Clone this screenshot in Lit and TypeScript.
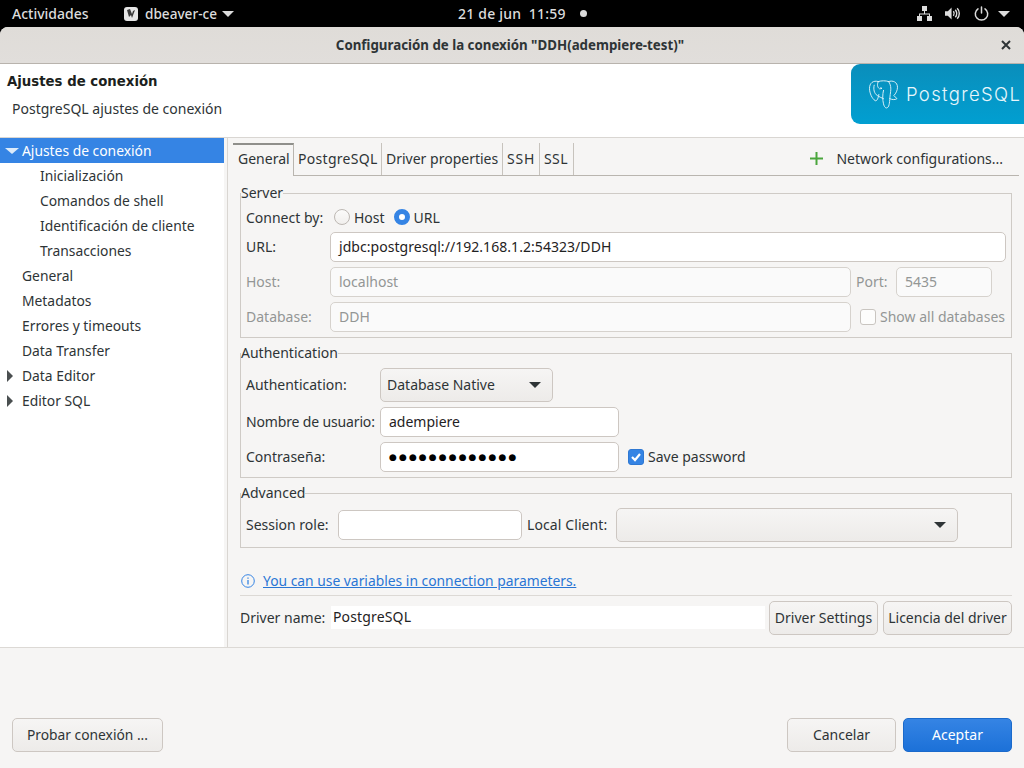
import { LitElement, html, css, svg } from "lit";
import { customElement } from "lit/decorators.js";

const caret = (cls: string) => html`<span class="caret ${cls}"></span>`;

@customElement("app-root")
export class AppRoot extends LitElement {
  static styles = css`
    :host {
      display: flex;
      flex-direction: column;
      height: 768px;
      width: 1024px;
      overflow: hidden;
      background: #000;
      font-family: "Noto Sans", "Liberation Sans", sans-serif;
      font-size: 14px;
      color: #2e3436;
    }
    * { box-sizing: border-box; }
    .topbar {
      height: 27px;
      flex: none;
      display: flex;
      align-items: center;
      color: #dcdcdc;
      font-weight: 500;
      position: relative;
    }
    .act { margin-left: 12px; width: 112px; }
    .appicon { width: 14px; height: 14px; display: block; }
    .appname { margin-left: 7px; font-size: 13.6px; }
    .tri-top {
      width: 0; height: 0; margin-left: 5px;
      border-left: 6px solid transparent;
      border-right: 6px solid transparent;
      border-top: 6px solid #dcdcdc;
    }
    .clock { position: absolute; left: 458px; top: 4px; width: 130px; display: flex; align-items: center; line-height: 19px; letter-spacing: .2px; }
    .dot { width: 7px; height: 7px; border-radius: 50%; background: #dcdcdc; position: absolute; left: 122px; top: 6px; }
    .tray { margin-left: auto; margin-right: 14px; display: flex; align-items: center; gap: 13px; }
    .tray svg { display: block; }
    .tray .power { margin-left: 1px; }
    .tray .tri-top { margin-left: -4px; }
    .window {
      flex: 1;
      min-height: 0;
      display: flex;
      flex-direction: column;
      background: #f6f5f4;
      border-radius: 8px 8px 0 0;
      overflow: hidden;
    }
    .titlebar {
      height: 37px;
      flex: none;
      background: linear-gradient(#dfdcd8, #e1dedb);
      border-bottom: 1px solid #b8b3ad;
      display: flex;
      align-items: center;
      justify-content: center;
      position: relative;
      font-weight: 700;
      font-size: 13.3px;
      padding-right: 4px;
    }
    .close { position: absolute; right: 12px; top: 12px; width: 12px; height: 12px; display: block; }
    .banner {
      height: 74px;
      flex: none;
      background: #fff;
      border-bottom: 1px solid #d9d6d2;
      display: flex;
      justify-content: space-between;
      align-items: flex-start;
    }
    .btitle { font-family: "DejaVu Sans", sans-serif; font-weight: 700; font-size: 13.3px; margin: 8px 0 0 7px; line-height: 19px; color: #1c1f20; }
    .bsub { margin: 8px 0 0 12px; line-height: 19px; }
    .logo {
      width: 173px; height: 60px;
      background: linear-gradient(#0a8ebb, #019fd1);
      border-radius: 9px 0 0 9px;
      display: flex; align-items: center;
      overflow: hidden;
      color: #e8f6fb;
    }
    .logo svg { margin-left: 18px; flex: none; }
    .logotext { font-family: "Inter", sans-serif; font-weight: 300; font-size: 18.5px; margin-left: 8px; letter-spacing: 1.35px; white-space: nowrap; }
    .main {
      flex: none;
      display: flex;
      border-bottom: 1px solid #dcd9d5;
    }
    .tree {
      width: 224px;
      flex: none;
      background: #fff;
      margin-right: 3px;
      font-size: 13.85px;
    }
    .row {
      height: 25px;
      line-height: 25px;
      padding-left: 22px;
      position: relative;
      white-space: nowrap;
      color: #2e3436;
    }
    .row.child { padding-left: 40px; }
    .row.sel { background: #3584e4; color: #fff; }
    .caret { position: absolute; width: 0; height: 0; }
    .caret.down {
      left: 5px; top: 10px;
      border-left: 7px solid transparent;
      border-right: 7px solid transparent;
      border-top: 6px solid #dcebfa;
    }
    .caret.right {
      left: 7px; top: 7px;
      border-top: 6px solid transparent;
      border-bottom: 6px solid transparent;
      border-left: 6px solid #4a4f50;
    }
    .panel {
      flex: 1;
      min-width: 0;
      border-left: 1px solid #d9d6d2;
      padding: 5px 12px 12px 12px;
      display: flex;
      flex-direction: column;
    }
    .tabs {
      height: 33px;
      margin: 0 -7px;
      border-bottom: 1px solid #b9b5af;
      display: flex;
      align-items: stretch;
    }
    .tab {
      padding: 4px 0 0 4px;
      line-height: 24px;
      border-right: 1px solid #c7c3bd;
      white-space: nowrap;
      flex: none;
    }
    .tab.on { border-top: 2px solid #8f8f8b; padding: 2px 0 0 5px; margin-bottom: -1px; background: #f6f5f4; border-right-color: #b9b5af; width: 61px; }
    .t88 { width: 88px; letter-spacing: .3px; }
    .t121 { width: 121px; }
    .t37 { width: 37px; letter-spacing: .8px; }
    .t34 { width: 34px; letter-spacing: .4px; }
    .netcfg { margin-left: auto; display: flex; align-items: center; padding: 0 16px 2px 0; gap: 13px; }
    .netcfg svg { display: block; }
    fieldset {
      margin: 0;
      padding: 4px 5px 5px 5px;
      border: 1px solid #cfcbc6;
      min-width: 0;
      display: flex;
      flex-direction: column;
      gap: 5px;
    }
    legend { padding: 0; line-height: 16px; margin-left: -5px; }
    .server { margin-top: 9px; }
    .auth, .adv { margin-top: 7px; }
    .line { display: flex; align-items: center; white-space: nowrap; }
    .lab { flex: none; padding-bottom: 2px; }
    .connect .lab { padding-bottom: 0; }
    .w84 { width: 84px; }
    .w134 { width: 134px; }
    .tight { letter-spacing: -.15px; }
    .connect { height: 24px; margin-bottom: -2px; }
    .radio {
      width: 16px; height: 16px; border-radius: 50%; flex: none;
      border: 1px solid #bdb8b3;
      background: linear-gradient(#fbfbfa, #f1efed);
      margin: 0 4px 0 4px;
    }
    .radio.on { background: #fff; border: 5px solid #3584e4; margin-left: 9px; }
    .inp {
      height: 30px;
      line-height: 27px;
      border: 1px solid #cdc7c2;
      border-radius: 5px;
      background: #fff;
      padding: 0 8px;
      color: #1f2223;
      white-space: nowrap;
    }
    .wide { letter-spacing: .05px; }
    .grow { flex: 1; min-width: 0; }
    .dis { background: #fafafa; color: #939695; border-color: #d6d2cd; }
    .mut { color: #939695; }
    .porthost { margin-left: 5px; width: 40px; }
    .portval { width: 96px; margin-right: 14px; flex: none; }
    .w126 { width: 126px; flex: none; padding-bottom: 2px; }
    .cb {
      width: 16px; height: 16px; flex: none; border-radius: 3px;
      border: 1px solid #c9c5c0;
      background: #fdfdfc;
      margin: 0 4px 0 9px;
      display: block;
    }
    .cb.on { background: #3584e4; border-color: #2f78d2; }
    .cb.on svg { display: block; }
    .sel-btn {
      display: flex; align-items: center; justify-content: space-between;
      height: 34px;
      border: 1px solid #cdc7c2;
      border-radius: 5px;
      background: linear-gradient(#f6f5f4, #edebe9);
      padding: 0 11px 2px 6px;
      flex: none;
    }
    .tri { width: 0; height: 0; border-left: 6px solid transparent; border-right: 6px solid transparent; border-top: 6px solid #2e3436; margin-top: 2px; }
    .w173 { width: 173px; }
    .w239 { width: 239px; flex: none; }
    .first { margin-top: 3px; }
    .w92 { width: 92px; }
    .w184 { width: 184px; flex: none; }
    .dots { font-size: 9px; letter-spacing: 2.1px; color: #000; font-family: "DejaVu Sans", sans-serif; padding-left: 8px; line-height: 28px; }
    .sessline { height: 34px; margin-top: 3px; }
    .lc { margin-left: 5px; width: 89px; letter-spacing: .1px; }
    .w342 { width: 342px; flex: none; }
    .info {
      margin-top: 22px;
      height: 22px;
      display: flex;
      align-items: center;
      gap: 8px;
    }
    .info svg { display: block; margin-left: 1px; }
    .link { color: #2a76d4; text-decoration: underline; line-height: 20px; font-size: 13.85px; }
    .sep { border-top: 1px solid #dcd9d5; margin-top: 3px; }
    .driver { margin-top: 5px; display: flex; align-items: center; }
    .w86 { width: 86px; }
    .drvfield { width: 434px; height: 23px; background: #fff; line-height: 22px; padding-left: 2px; color: #1f2223; margin: 0 4px 1px 5px; flex: none; letter-spacing: .15px; }
    .btn {
      height: 34px;
      border: 1px solid #cdc7c2;
      border-radius: 5px;
      background: linear-gradient(#f6f5f4, #edebe9);
      display: flex; align-items: center; justify-content: center;
      white-space: nowrap;
      flex: none;
      padding-bottom: 2px;
    }
    .b108 { width: 109px; }
    .b129 { width: 129px; margin-left: 5px; }
    .footer {
      flex: 1;
      display: flex;
      align-items: flex-end;
      padding: 0 12px 16px;
      gap: 7px;
    }
    .b151 { width: 151px; margin-right: auto; font-size: 13.8px; }
    .b109 { width: 109px; }
    .ok { background: linear-gradient(#3584e4, #1c71d8); border-color: #1b6acb; color: #fff; }
  `;

  private logoSvg() {
    return svg`<svg width="29" height="29" viewBox="0 0 28 28" fill="none" stroke="#e4f4fa" stroke-width=".9" stroke-linejoin="round" stroke-linecap="round">
      <path d="M9 1.500C4 0 .5 3 .5 8c0 5 2.500 10 5.500 12 2 .5 3-3 3.500-6"/>
      <path d="M9 1.500c3-1 7-1 10 0"/>
      <path d="M19 1.500c4-1.500 8.500.5 8.500 5.500 0 3-1.500 6-3.500 8l3 3c-2 1.500-5 1-7 0"/>
      <path d="M14 10c-1 4-1 9 0 13 1 4 3 5 4.500 3 1.500-2 1.500-8 2-12 .5-4 1.500-8-1.500-12.500"/>
      <path d="M5 5c-1 4 0 8 3 10 2 1.500 4 2 6 3"/>
      <path d="M9 1.500C7.500 4 8 7 10 8.500"/>
      <circle cx="11.500" cy="8" r=".6"/>
    </svg>`;
  }

  render() {
    return html`
      <div class="topbar">
        <span class="act">Actividades</span>
        <svg class="appicon" viewBox="0 0 14 14">
          <rect width="14" height="14" rx="3" fill="#e6e6e6"/>
          <path d="M3 3l2 7 2-2 1 3 3-8-2 1-1 3-2-5z" fill="#3a3a3a"/>
        </svg>
        <span class="appname">dbeaver-ce</span>
        <span class="tri-top"></span>
        <div class="clock"><span>21 de jun&nbsp; 11:59</span><span class="dot"></span></div>
        <div class="tray">
          <svg width="15" height="15" viewBox="0 0 15 15" fill="#dcdcdc"><rect x="5" y="0" width="5" height="5"/><rect x="0" y="10" width="5" height="5"/><rect x="10" y="10" width="5" height="5"/><path d="M7 5h1v2.500h5V10h-1V8.500H3V10H2V7.500h5z"/></svg>
          <svg width="15" height="15" viewBox="0 0 16 15" fill="none" stroke="#dcdcdc"><path d="M0 5h3l4-4v13l-4-4H0z" fill="#dcdcdc" stroke="none"/><path d="M9 5c1 1.500 1 3.500 0 5M11 3.500c2 2.500 2 5.500 0 8M13 2c3 3 3 8 0 11" stroke-width="1.500"/></svg>
          <svg class="power" width="15" height="15" viewBox="0 0 15 15" fill="none" stroke="#dcdcdc" stroke-width="1.500" stroke-linecap="round"><path d="M7.500 1v6"/><path d="M4 2.800a6.200 6.200 0 1 0 7 0"/></svg>
          <span class="tri-top"></span>
        </div>
      </div>
      <div class="window">
        <div class="titlebar">
          Configuración de la conexión "DDH(adempiere-test)"
          <svg class="close" viewBox="0 0 12 12" stroke="#2e3436" stroke-width="2"><path d="M2 2l8 8M10 2l-8 8"/></svg>
        </div>
        <div class="banner">
          <div>
            <div class="btitle">Ajustes de conexión</div>
            <div class="bsub">PostgreSQL ajustes de conexión</div>
          </div>
          <div class="logo">${this.logoSvg()}<span class="logotext">PostgreSQL</span></div>
        </div>
        <div class="main">
          <div class="tree">
            <div class="row sel">${caret("down")}Ajustes de conexión</div>
            <div class="row child">Inicialización</div>
            <div class="row child">Comandos de shell</div>
            <div class="row child">Identificación de cliente</div>
            <div class="row child">Transacciones</div>
            <div class="row">General</div>
            <div class="row">Metadatos</div>
            <div class="row">Errores y timeouts</div>
            <div class="row">Data Transfer</div>
            <div class="row">${caret("right")}Data Editor</div>
            <div class="row">${caret("right")}Editor SQL</div>
          </div>
          <div class="panel">
            <div class="tabs">
              <div class="tab on">General</div>
              <div class="tab t88">PostgreSQL</div>
              <div class="tab t121">Driver properties</div>
              <div class="tab t37">SSH</div>
              <div class="tab t34">SSL</div>
              <div class="netcfg">
                <svg width="13" height="13" viewBox="0 0 13 13" fill="#4aa63c"><rect x="5.500" y="0" width="2" height="13"/><rect x="0" y="5.500" width="13" height="2"/></svg>
                <span>Network configurations...</span>
              </div>
            </div>
            <fieldset class="server">
              <legend>Server</legend>
              <div class="line connect">
                <span class="lab w84">Connect by:</span>
                <span class="radio"></span><span class="lab">Host</span>
                <span class="radio on"></span><span class="lab">URL</span>
              </div>
              <div class="line">
                <span class="lab w84">URL:</span>
                <div class="inp grow wide">jdbc:postgresql://192.168.1.2:54323/DDH</div>
              </div>
              <div class="line">
                <span class="lab w84 mut">Host:</span>
                <div class="inp dis grow">localhost</div>
                <span class="lab mut porthost">Port:</span>
                <div class="inp dis portval">5435</div>
              </div>
              <div class="line">
                <span class="lab w84 mut">Database:</span>
                <div class="inp dis grow">DDH</div>
                <span class="cb"></span><span class="mut w126">Show all databases</span>
              </div>
            </fieldset>
            <fieldset class="auth">
              <legend>Authentication</legend>
              <div class="line first">
                <span class="lab w134">Authentication:</span>
                <div class="sel-btn w173"><span>Database Native</span><span class="tri"></span></div>
              </div>
              <div class="line">
                <span class="lab w134 tight">Nombre de usuario:</span>
                <div class="inp w239">adempiere</div>
              </div>
              <div class="line">
                <span class="lab w134">Contraseña:</span>
                <div class="inp w239 dots">●●●●●●●●●●●●●</div>
                <span class="cb on"><svg width="14" height="14" viewBox="0 0 14 14" fill="none" stroke="#fff" stroke-width="2.200"><path d="M3 7l3 3 5-6"/></svg></span><span class="lab">Save password</span>
              </div>
            </fieldset>
            <fieldset class="adv">
              <legend>Advanced</legend>
              <div class="line sessline">
                <span class="lab w92">Session role:</span>
                <div class="inp w184"></div>
                <span class="lab lc">Local Client:</span>
                <div class="sel-btn w342"><span></span><span class="tri"></span></div>
              </div>
            </fieldset>
            <div class="info">
              <svg width="14" height="14" viewBox="0 0 14 14" fill="none" stroke="#3584e4"><circle cx="7" cy="7" r="6.300"/><path d="M7 6v4.500M7 3.500v1.300" stroke-width="1.300"/></svg>
              <span class="link">You can use variables in connection parameters.</span>
            </div>
            <div class="sep"></div>
            <div class="driver">
              <span class="lab w86">Driver name:</span>
              <div class="drvfield">PostgreSQL</div>
              <div class="btn b108">Driver Settings</div>
              <div class="btn b129">Licencia del driver</div>
            </div>
          </div>
        </div>
        <div class="footer">
          <div class="btn b151">Probar conexión ...</div>
          <div class="btn b109">Cancelar</div>
          <div class="btn b109 ok">Aceptar</div>
        </div>
      </div>
    `;
  }
}
